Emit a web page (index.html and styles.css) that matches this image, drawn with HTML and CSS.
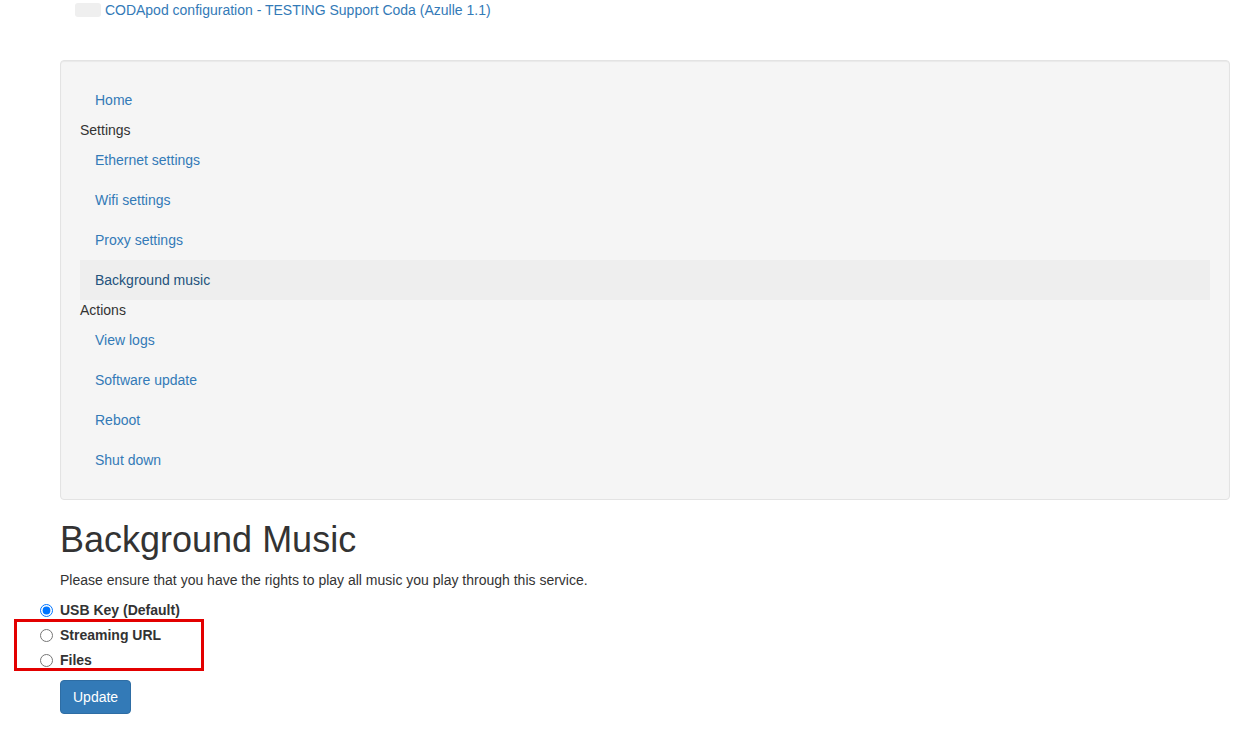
FILE: index.html
```html
<!DOCTYPE html>
<html>
<head>
<meta charset="utf-8">
<title>CODApod configuration</title>
<link rel="stylesheet" href="styles.css">
</head>
<body>
<div class="header">
  <a class="brand" href="#"><span class="logo"></span> CODApod configuration - TESTING Support Coda (Azulle 1.1)</a>
</div>
<div class="page">
  <div class="well">
    <ul class="nav">
      <li><a href="#">Home</a></li>
      <li class="nav-header">Settings</li>
      <li><a href="#">Ethernet settings</a></li>
      <li><a href="#">Wifi settings</a></li>
      <li><a href="#">Proxy settings</a></li>
      <li class="active"><a href="#">Background music</a></li>
      <li class="nav-header">Actions</li>
      <li><a href="#">View logs</a></li>
      <li><a href="#">Software update</a></li>
      <li><a href="#">Reboot</a></li>
      <li><a href="#">Shut down</a></li>
    </ul>
  </div>
  <h1 class="title">Background Music</h1>
  <p class="note">Please ensure that you have the rights to play all music you play through this service.</p>
  <form class="form">
    <div class="radio"><label><input type="radio" name="src" checked> USB Key (Default)</label></div>
    <div class="radio"><label><input type="radio" name="src"> Streaming URL</label></div>
    <div class="radio"><label><input type="radio" name="src"> Files</label></div>
    <button type="button" class="btn">Update</button>
  </form>
</div>
<div class="highlight"></div>
</body>
</html>
```
FILE: styles.css
```css
html, body {
  margin: 0;
  padding: 0;
}
body {
  font-family: "Liberation Sans", Arial, sans-serif;
  font-size: 14px;
  line-height: 20px;
  color: #333;
  background: #fff;
  position: relative;
  min-height: 732px;
}
a {
  color: #337ab7;
  text-decoration: none;
}
.header {
  height: 20px;
  padding-left: 75px;
}
.brand {
  display: inline-block;
  line-height: 20px;
}
.logo {
  display: inline-block;
  width: 26px;
  height: 14px;
  background: #efefef;
  border-radius: 3px;
  vertical-align: -2px;
}
.page {
  padding: 40px 20px 0 60px;
}
.well {
  background: #f5f5f5;
  border: 1px solid #e3e3e3;
  border-radius: 4px;
  box-shadow: inset 0 1px 1px rgba(0,0,0,.05);
  padding: 19px;
  margin-bottom: 20px;
}
.nav {
  list-style: none;
  margin: 0;
  padding: 0;
}
.nav li a {
  display: block;
  padding: 10px 15px;
  line-height: 20px;
  border-radius: 0;
}
.nav li.active a {
  background: #eee;
  color: #23527c;
}
.nav-header {
  line-height: 20px;
  color: #333;
}
.title {
  font-size: 36px;
  font-weight: 500;
  line-height: 1.1;
  margin: 20px 0 10px;
}
.note {
  margin: 0 0 10px;
}
.form {
  margin: 0;
}
.radio {
  position: relative;
  margin: 10px 0;
}
.radio + .radio {
  margin-top: -5px;
}
.radio label {
  display: block;
  padding-left: 0;
  font-weight: bold;
  line-height: 20px;
  min-height: 20px;
}
.radio input {
  position: absolute;
  left: -20px;
  top: 0;
  margin: 4px 0 0;
  width: 13px;
  height: 13px;
}
.btn {
  font-family: "Liberation Sans", Arial, sans-serif;
  font-size: 14px;
  line-height: 20px;
  padding: 6px 12px;
  color: #fff;
  background: #337ab7;
  border: 1px solid #2e6da4;
  border-radius: 4px;
}
.highlight {
  position: absolute;
  left: 14px;
  top: 619px;
  width: 184px;
  height: 46px;
  border: 3px solid #e30000;
  pointer-events: none;
}
```
